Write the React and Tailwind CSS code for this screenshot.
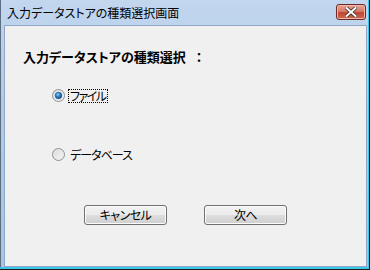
const jp = "font-['MS_UI_Gothic','Noto_Sans_CJK_JP',sans-serif] [font-feature-settings:'palt']";

function Radio({ checked }) {
  return (
    <svg width="13" height="13" viewBox="0 0 13 13" className="shrink-0">
      <defs>
        <linearGradient id={checked ? "rbg1" : "rbg0"} x1="0" y1="0" x2="1" y2="1">
          <stop offset="0" stopColor="#d8d8d8" />
          <stop offset="1" stopColor="#f8f8f8" />
        </linearGradient>
        <radialGradient id="dot" cx="0.4" cy="0.35" r="0.7">
          <stop offset="0" stopColor="#8fd0ff" />
          <stop offset="0.45" stopColor="#2a86d0" />
          <stop offset="1" stopColor="#0c3f77" />
        </radialGradient>
      </defs>
      <circle cx="6.5" cy="6.5" r="6" fill={`url(#${checked ? "rbg1" : "rbg0"})`} stroke="#8e8f8f" />
      <circle cx="6.5" cy="6.5" r="4.5" fill="none" stroke="#e8e8e8" />
      {checked && <circle cx="6.5" cy="6.5" r="3.3" fill="url(#dot)" stroke="#1a4f86" strokeWidth="0.6" />}
    </svg>
  );
}

function WinButton({ children }) {
  return (
    <button className="w-[83px] h-[20px] rounded-[3px] border border-[#707070] bg-[linear-gradient(#f2f2f2_0%,#ebebeb_48%,#dddddd_52%,#cfcfcf_100%)] shadow-[inset_0_0_0_1px_#fcfcfc] text-[12px] leading-none text-black flex items-center justify-center tracking-[-0.5px]">
      {children}
    </button>
  );
}

export default function App() {
  return (
    <div className={`w-[370px] h-[270px] bg-[#1b1b1b] pr-px pb-px ${jp}`}>
      <div className="h-full bg-[#3ec6ea] pr-[1px] pb-[2px]">
        <div className="h-full flex flex-col border-l border-[#5d6e82] bg-[linear-gradient(#c2d6ee,#b0cae8_40%,#a9c4e5)] pl-[3px] pr-px">
          {/* title bar */}
          <div className="h-[25px] shrink-0 flex items-start justify-between">
            <span className="text-[12px] leading-none text-black mt-[7px] ml-[3px]">入力データストアの種類選択画面</span>
            <div className="mt-[4px] mr-[1px] w-[30px] h-[16px] rounded-[3px] border border-[#6b2a25] bg-[linear-gradient(#e8a493,#d67c6a_45%,#c2452f_55%,#cc6a55)] shadow-[inset_0_0_0_1px_#f0b8a8] flex items-center justify-center">
              <svg width="12" height="10" viewBox="0 0 12 10">
                <path d="M1.5 1 L10.5 9 M10.5 1 L1.5 9" stroke="#3a2a2a" strokeWidth="3.6" strokeLinecap="square" />
                <path d="M1.5 1 L10.5 9 M10.5 1 L1.5 9" stroke="#ffffff" strokeWidth="2" strokeLinecap="square" />
              </svg>
            </div>
          </div>

          {/* client area */}
          <div className="flex-1 border border-[#90a8c6] bg-[#f0f0f0] flex flex-col text-black">
            <div className="pt-[23px] pl-[18px] text-[13px] font-bold leading-[16px] flex">
              <span>入力データストアの種類選択</span>
              <span className="ml-[10px]">：</span>
            </div>

            <div className="mt-[24px] ml-[47px] flex items-center gap-[4px]">
              <Radio checked />
              <span className="text-[12px] leading-[12px] outline outline-1 outline-dotted outline-black px-px tracking-[-1.5px]">ファイル</span>
            </div>

            <div className="mt-[46px] ml-[47px] flex items-center gap-[4px]">
              <Radio />
              <span className="text-[12px] leading-[12px] px-px tracking-[-1px]">データベース</span>
            </div>

            <div className="mt-[44px] ml-[79px] flex gap-[37px]">
              <WinButton>キャンセル</WinButton>
              <WinButton>次へ</WinButton>
            </div>
          </div>
        </div>
      </div>
    </div>
  );
}
